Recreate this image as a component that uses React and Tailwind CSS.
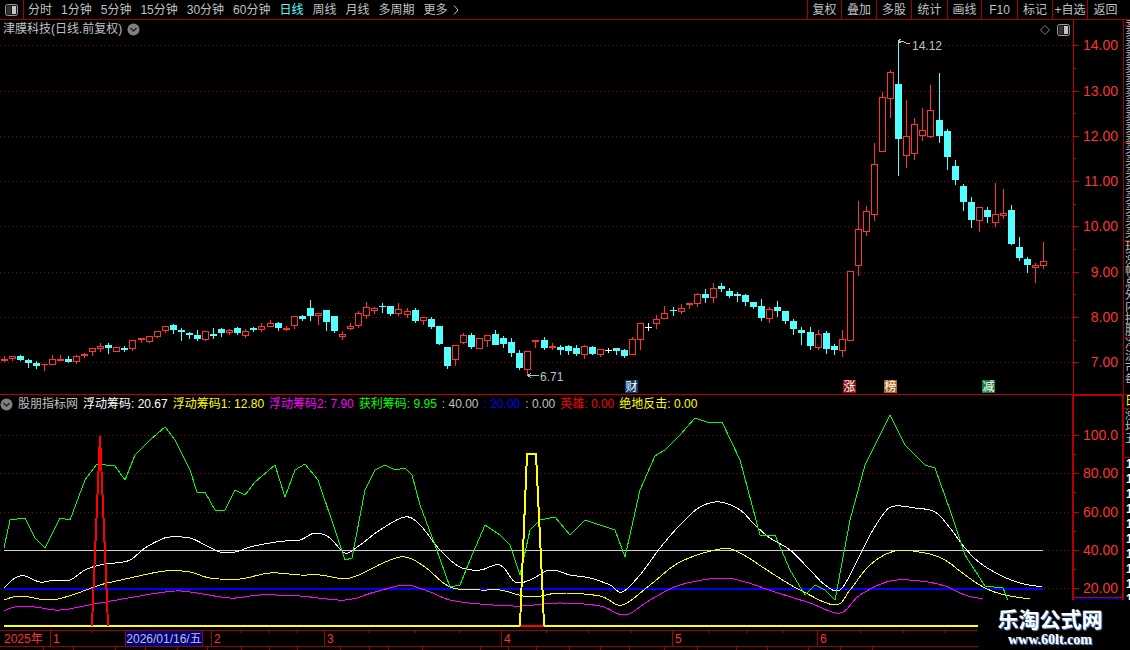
const leftTabs = ['分时', '1分钟', '5分钟', '15分钟', '30分钟', '60分钟', '日线', '周线', '月线', '多周期'];
const rightTabs = [
  ['复权', 'w-[34px]'],
  ['叠加', 'w-[35px]'],
  ['多股', 'w-[35px]'],
  ['统计', 'w-[36px]'],
  ['画线', 'w-[34px]'],
  ['F10', 'w-[36px]'],
  ['标记', 'w-[35px]'],
  ['+自选', 'w-[35px]'],
  ['返回', 'w-[36px]'],
];

// [x, bodyTop, bodyBottom, wickTop, wickBottom, colour], read off 3x crops
const candleGroups = [
  {
    ox: 0,
    oy: 290,
    rows: [
      [13, 207, 212, 199, 216, 'r'], [37, 199, 208, 199, 213, 'r'], [61, 198, 210, 195, 213, 'c'], [85, 210, 219, 207, 234, 'c'],
      [109, 219, 228, 213, 236, 'c'], [133, 222, 223, 222, 243, 'r'], [157, 208, 224, 195, 225, 'r'], [181, 208, 212, 195, 214, 'r'],
      [205, 207, 216, 198, 219, 'c'], [229, 199, 215, 195, 222, 'r'], [253, 192, 197, 188, 204, 'r'], [277, 175, 185, 175, 197, 'r'],
      [301, 169, 176, 159, 186, 'r'], [325, 165, 174, 159, 192, 'c'], [349, 172, 185, 172, 185, 'r'], [373, 174, 180, 168, 186, 'c'],
      [397, 151, 176, 151, 183, 'r'], [424, 145, 151, 144, 159, 'r'], [448, 139, 155, 139, 159, 'r'], [472, 124, 140, 124, 144, 'r'],
      [496, 109, 124, 109, 129, 'r'], [520, 105, 120, 102, 132, 'c'], [544, 120, 126, 114, 153, 'c'], [568, 129, 134, 126, 147, 'c'],
      [592, 135, 147, 120, 153, 'c'], [616, 124, 149, 124, 153, 'r'], [640, 132, 137, 114, 147, 'c'], [664, 117, 129, 114, 141, 'c'],
      [688, 121, 129, 118, 135, 'r'], [712, 114, 129, 111, 135, 'c'], [736, 124, 137, 118, 144, 'r'], [760, 114, 120, 111, 126, 'c'],
      [784, 108, 119, 99, 126, 'r'], [811, 100, 110, 90, 111, 'r'], [835, 99, 114, 96, 123, 'c'], [859, 114, 119, 108, 123, 'r'],
      [883, 79, 109, 79, 117, 'r'], [907, 79, 87, 75, 93, 'c'], [931, 54, 78, 30, 93, 'c'], [955, 70, 77, 70, 105, 'r'],
      [979, 60, 96, 60, 123, 'c'],
    ],
  },
  {
    ox: 330,
    oy: 290,
    rows: [
      [13, 78, 123, 78, 129, 'c'], [37, 133, 140, 124, 150, 'r'], [61, 109, 117, 100, 120, 'r'], [85, 70, 109, 64, 114, 'r'],
      [109, 52, 77, 37, 87, 'r'], [133, 55, 64, 51, 72, 'r'], [157, 48, 49, 40, 69, 'c'], [181, 48, 72, 48, 78, 'c'],
      [205, 58, 71, 40, 78, 'r'], [232, 64, 74, 55, 84, 'r'], [256, 60, 93, 54, 99, 'c'], [280, 82, 92, 82, 105, 'r'],
      [304, 87, 111, 81, 117, 'c'], [328, 108, 162, 108, 165, 'c'], [352, 171, 228, 171, 237, 'c'], [376, 165, 210, 165, 228, 'r'],
      [400, 135, 159, 130, 162, 'r'], [424, 135, 171, 129, 177, 'c'], [448, 145, 178, 145, 178, 'r'], [472, 135, 153, 135, 171, 'r'],
      [496, 132, 165, 120, 165, 'c'], [520, 144, 162, 138, 174, 'c'], [544, 156, 189, 144, 201, 'c'], [568, 189, 234, 180, 240, 'c'],
      [592, 183, 240, 183, 255, 'r'], [616, 150, 156, 150, 174, 'r'], [643, 150, 174, 141, 180, 'c'], [667, 168, 175, 159, 181, 'r'],
      [691, 171, 179, 165, 195, 'c'], [715, 168, 183, 165, 195, 'c'], [739, 174, 192, 165, 198, 'c'], [763, 168, 194, 165, 207, 'r'],
      [787, 171, 192, 168, 195, 'c'], [811, 178, 194, 178, 201, 'r'], [835, 181, 182, 174, 189, 'w'], [859, 174, 183, 174, 195, 'c'],
      [883, 180, 198, 177, 204, 'c'], [907, 147, 194, 141, 194, 'r'], [931, 99, 149, 99, 180, 'r'], [955, 110, 111, 99, 123, 'w'],
    ],
  },
  {
    ox: 640,
    oy: 270,
    rows: [
      [49, 148, 163, 136, 177, 'r'], [73, 130, 146, 108, 146, 'r'], [100, 121, 122, 111, 138, 'c'], [124, 115, 125, 102, 132, 'r'],
      [148, 100, 104, 100, 117, 'r'], [172, 73, 101, 70, 111, 'r'], [196, 72, 84, 57, 99, 'c'], [220, 55, 83, 39, 99, 'r'],
      [244, 48, 57, 39, 66, 'c'], [268, 63, 78, 54, 84, 'c'], [292, 72, 77, 66, 96, 'c'], [316, 75, 96, 72, 108, 'c'],
      [340, 96, 111, 96, 117, 'c'], [364, 108, 144, 87, 153, 'c'], [388, 118, 146, 111, 159, 'r'], [412, 111, 123, 93, 141, 'c'],
      [436, 123, 153, 123, 162, 'c'], [460, 153, 177, 147, 195, 'c'], [484, 180, 189, 171, 225, 'c'], [511, 186, 228, 171, 240, 'c'],
      [535, 193, 233, 180, 240, 'r'], [559, 189, 237, 183, 252, 'c'], [583, 228, 240, 222, 255, 'c'], [607, 208, 242, 180, 261, 'r'],
      [631, 4, 212, 4, 212, 'r'],
    ],
  },
  {
    ox: 840,
    oy: 40,
    rows: [
      [55, 568, 677, 484, 707, 'r'], [79, 514, 575, 499, 587, 'r'], [103, 373, 524, 310, 543, 'r'], [127, 172, 335, 156, 335, 'r'],
      [151, 97, 176, 91, 234, 'r'], [175, 132, 297, 0, 408, 'c'], [199, 289, 347, 181, 384, 'r'], [223, 253, 341, 235, 360, 'r'],
      [247, 271, 287, 205, 303, 'r'], [271, 211, 290, 135, 293, 'r'], [298, 240, 288, 99, 309, 'c'], [322, 273, 351, 267, 390, 'c'],
      [346, 378, 420, 360, 435, 'c'], [370, 438, 486, 432, 513, 'c'], [394, 486, 540, 471, 564, 'c'], [418, 502, 542, 502, 576, 'r'],
      [442, 510, 531, 501, 549, 'c'], [466, 523, 548, 429, 561, 'r'], [490, 519, 527, 447, 537, 'r'], [514, 510, 612, 495, 615, 'c'],
      [538, 621, 654, 591, 663, 'c'], [562, 657, 675, 651, 699, 'c'], [586, 676, 683, 670, 729, 'r'], [610, 664, 677, 606, 687, 'r'],
    ],
  },
];

const priceLevels = [[45, '14.00'], [91, '13.00'], [136, '12.00'], [181, '11.00'], [226, '10.00'], [272, '9.00'], [317, '8.00'], [362, '7.00']];
const indicatorLevels = [[435, '100.0'], [473, '80.00'], [512, '60.00'], [550, '40.00'], [588, '20.00']];

const tags = [
  [625, '财', '#0b3a70'],
  [843, '涨', '#8a1212'],
  [884, '榜', '#a8641c'],
  [982, '减', '#17803a'],
];

const greenLine = '4,548 10,520 25,518 35,538 45,548 60,518 70,520 85,480 97,464 115,466 125,480 135,455 150,440 165,427 175,440 190,470 197,492 205,492 215,510 225,510 235,490 245,495 255,482 275,465 285,497 295,470 305,464 318,480 335,530 345,560 352,558 365,490 375,470 385,465 395,470 405,468 412,475 420,505 435,545 450,587 460,585 470,560 485,525 500,535 510,545 520,575 530,530 540,520 555,517 570,535 585,520 600,525 615,530 625,557 640,490 655,456 665,450 680,435 695,418 710,423 722,422 740,460 760,535 775,535 790,570 805,595 815,585 825,590 835,600 850,520 865,465 880,435 890,415 905,445 925,465 935,468 950,510 965,555 985,586 1003,588 1008,600';
const whiteLine = '4,588 15,578 25,576 40,582 55,580 70,580 85,570 100,565 115,563 130,560 145,548 160,540 170,537 190,538 205,545 220,552 235,552 250,547 270,543 285,541 300,540 315,533 330,538 345,553 360,545 380,530 405,517 420,525 440,550 460,567 480,570 500,565 515,582 530,580 550,570 570,575 590,578 610,585 622,592 640,575 660,548 680,525 700,507 720,502 740,510 755,525 770,538 790,550 810,570 825,585 840,590 855,565 870,535 885,512 895,506 915,508 935,512 950,528 965,548 980,563 1000,575 1020,583 1042,587';
const yellowLine = '4,600 20,596 50,600 75,594 100,585 130,578 165,571 190,572 210,578 240,579 270,573 300,575 320,575 350,578 385,562 405,557 425,567 450,587 480,590 500,590 530,597 560,593 600,596 622,605 650,585 680,562 720,549 740,553 770,572 800,590 835,605 850,590 870,565 895,551 925,553 945,560 965,575 985,588 1005,595 1030,599';
const magentaLine = '4,611 15,607 35,607 60,610 100,603 165,592 190,592 230,598 260,595 300,596 345,600 375,592 405,585 430,592 450,600 480,604 520,606 560,603 600,606 625,615 650,600 680,585 720,578 745,582 775,592 810,603 840,613 860,595 890,581 920,581 945,586 965,595 983,599';

const legend = [
  ['股朋指标网', 'text-[#c0c0c0]'],
  ['浮动筹码: 20.67', 'text-white'],
  ['浮动筹码1: 12.80', 'text-[#ffff00]'],
  ['浮动筹码2: 7.90', 'text-[#ff00ff]'],
  ['获利筹码: 9.95', 'text-[#00ff00]'],
  [': 40.00', 'text-[#c0c0c0]'],
  [': 20.00', 'text-[#0000ff]'],
  [': 0.00', 'text-[#c0c0c0]'],
  ['英雄: 0.00', 'text-[#ff0000]'],
  ['绝地反击: 0.00', 'text-[#ffff00]'],
];

const dateSegments = [
  ['2025年', 'w-[51px] pl-[4px] border-r border-[#a00000]'],
  ['1', 'w-[161px] pl-[2px] border-r border-[#a00000]'],
  ['2', 'w-[113px] pl-[2px] border-r border-[#a00000]'],
  ['3', 'w-[177px] pl-[2px] border-r border-[#a00000]'],
  ['4', 'w-[171px] pl-[2px] border-r border-[#a00000]'],
  ['5', 'w-[145px] pl-[2px] border-r border-[#a00000]'],
  ['6', 'w-[160px] pl-[2px]'],
];
const topTicks = [92, 241, 269, 297, 369, 415, 459, 546, 588, 631, 709, 746, 782, 860, 903, 945];
const bottomTicks = [43, 73, 115, 145, 177, 207, 241, 269, 297, 340, 369, 388, 422, 480, 508, 536, 569, 600, 629, 664, 697, 736, 767, 808, 840, 872];

const sideSections = [
  { rows: ['卖'], cls: 'h-[6px]' },
  { rows: ['卖', '卖', '卖', '卖', '卖', '卖', '卖', '卖', '卖', '卖'], cls: 'h-[117px]' },
  { rows: ['买', '买', '买', '买', '买', '买', '买', '买'], cls: 'h-[98px]' },
  { rows: ['现', '涨', '幅', '总', '外', '内', '换', '股'], cls: 'h-[97px]' },
  { rows: ['净', '流', '市', '每'], cls: 'h-[57px]' },
];

// turns the sampled "x,y x,y" string into a rounded curve so the lines don't look polygonal
function smooth(points) {
  const p = points.split(' ').map((pair) => pair.split(',').map(Number));
  const out = [];
  for (let i = 0; i < p.length - 1; i++) {
    const a = p[Math.max(i - 1, 0)];
    const b = p[i];
    const c = p[i + 1];
    const d = p[Math.min(i + 2, p.length - 1)];
    for (let s = 0; s < 6; s++) {
      const t = s / 6;
      const x = 0.5 * (2 * b[0] + (c[0] - a[0]) * t + (2 * a[0] - 5 * b[0] + 4 * c[0] - d[0]) * t * t + (3 * b[0] - a[0] - 3 * c[0] + d[0]) * t * t * t);
      const y = 0.5 * (2 * b[1] + (c[1] - a[1]) * t + (2 * a[1] - 5 * b[1] + 4 * c[1] - d[1]) * t * t + (3 * b[1] - a[1] - 3 * c[1] + d[1]) * t * t * t);
      out.push(`${x.toFixed(1)},${y.toFixed(1)}`);
    }
  }
  const last = p[p.length - 1];
  out.push(`${last[0]},${last[1]}`);
  return out.join(' ');
}

function PanelIcon() {
  return (
    <svg width="13" height="12" viewBox="0 0 13 12" className="block">
      <rect x="0.5" y="0.5" width="12" height="11" rx="2" fill="#1a1a1a" stroke="#9a9a9a" />
      <rect x="7" y="2" width="4" height="8" fill="#c4c4c4" />
      <rect x="2" y="2" width="4" height="8" fill="#333333" />
    </svg>
  );
}

function ChevronBadge() {
  return (
    <svg width="13" height="13" viewBox="0 0 13 13" className="block">
      <circle cx="6.5" cy="6.5" r="6" fill="#808080" />
      <polyline points="3.5,5 6.5,8 9.5,5" fill="none" stroke="#222222" strokeWidth="1.4" />
    </svg>
  );
}

function Candle({ x, bodyTop, bodyBottom, wickTop, wickBottom, tone }) {
  const colour = tone === 'r' ? '#ff3232' : tone === 'c' ? '#54ffff' : '#ffffff';
  const height = bodyBottom - bodyTop;
  if (height <= 2) {
    return (
      <g fill={colour}>
        <rect x={x} y={wickTop} width="1" height={wickBottom - wickTop} />
        <rect x={x - 3} y={bodyTop} width="7" height={Math.max(height, 1)} />
      </g>
    );
  }
  if (tone === 'c') {
    return (
      <g fill={colour}>
        <rect x={x} y={wickTop} width="1" height={wickBottom - wickTop} />
        <rect x={x - 3} y={bodyTop} width="7" height={height} />
      </g>
    );
  }
  return (
    <g>
      <rect x={x} y={wickTop} width="1" height={bodyTop - wickTop} fill={colour} />
      <rect x={x} y={bodyBottom} width="1" height={wickBottom - bodyBottom} fill={colour} />
      <rect x={x - 2.5} y={bodyTop + 0.5} width="6" height={height - 1} fill="#000000" stroke={colour} />
    </g>
  );
}

function Axis({ top, width, height, levels, minors }) {
  return (
    <svg width={width} height={height} viewBox={`1074 ${top} ${width} ${height}`} className="block shrink-0" shapeRendering="crispEdges">
      {levels.map(([y]) => (
        <rect key={y} x="1074" y={y} width="5" height="1" fill="#c00000" />
      ))}
      {minors.map((y) => (
        <rect key={y} x="1074" y={y} width="2" height="1" fill="#c00000" />
      ))}
      {levels.map(([y, label]) => (
        <text key={label} x="1118" y={y + 5} textAnchor="end" fontSize="14" fill="#ff3232" shapeRendering="auto">
          {label}
        </text>
      ))}
    </svg>
  );
}

function PriceChart() {
  const candles = candleGroups.flatMap((group) =>
    group.rows.map(([zx, bt, bb, wt, wb, tone]) => ({
      x: Math.round(group.ox + zx / 3),
      bodyTop: Math.round(group.oy + bt / 3),
      bodyBottom: Math.round(group.oy + bb / 3),
      wickTop: Math.round(group.oy + wt / 3),
      wickBottom: Math.round(group.oy + wb / 3),
      tone,
    }))
  );

  return (
    <svg width="1073" height="374" viewBox="0 20 1073 374" className="block shrink-0" shapeRendering="crispEdges">
      {priceLevels.map(([y]) => (
        <line key={y} x1="0" x2="1073" y1={y + 0.5} y2={y + 0.5} stroke="#900000" strokeDasharray="1 3" />
      ))}
      {candles.map((c) => (
        <Candle key={c.x} {...c} />
      ))}
      <polyline points="898,42 902,41 906,43 910,44" fill="none" stroke="#c0c0c0" />
      <polyline points="901,39 898,41 901,43" fill="none" stroke="#c0c0c0" />
      <text x="912" y="50" fontSize="12" fill="#c0c0c0" shapeRendering="auto">14.12</text>
      <line x1="528" x2="539" y1="375.5" y2="375.5" stroke="#c0c0c0" />
      <polyline points="531,373 528,375.5 531,378" fill="none" stroke="#c0c0c0" />
      <text x="540" y="381" fontSize="12" fill="#c0c0c0" shapeRendering="auto">6.71</text>
      {tags.map(([x, label, bg]) => (
        <g key={label}>
          <rect x={x} y="380" width="13" height="13" fill={bg} />
          <text x={x + 0.5} y="391" fontSize="12" fill="#ffffff" shapeRendering="auto">{label}</text>
        </g>
      ))}
    </svg>
  );
}

function IndicatorChart() {
  return (
    <svg width="1072" height="235" viewBox="0 395 1072 235" className="block shrink-0" shapeRendering="crispEdges">
      {indicatorLevels.map(([y]) => (
        <line key={y} x1="0" x2="1072" y1={y + 0.5} y2={y + 0.5} stroke="#900000" strokeDasharray="1 3" />
      ))}
      <line x1="4" x2="1043" y1="550.5" y2="550.5" stroke="#d0d0d0" />
      <line x1="4" x2="1043" y1="588.5" y2="588.5" stroke="#0000ff" strokeWidth="2" />
      <polyline points={smooth(whiteLine)} fill="none" stroke="#ffffff" />
      <polyline points={smooth(yellowLine)} fill="none" stroke="#ffff00" />
      <polyline points={smooth(magentaLine)} fill="none" stroke="#ff00ff" />
      <polyline points={greenLine} fill="none" stroke="#00ff00" />
      <rect x="4" y="625" width="974" height="2" fill="#ffff00" />
      <rect x="520" y="625" width="24" height="2" fill="#ff0000" />
      <polyline points="92,626 93,600 100,436 107,600 108,626" fill="none" stroke="#ff0000" strokeWidth="2" />
      <polyline points="520,626 521,600 527,454 536,454 543,600 544,626" fill="none" stroke="#ffff00" strokeWidth="2" />
    </svg>
  );
}

function Toolbar() {
  return (
    <div className="flex h-5 shrink-0 items-stretch justify-between border-b border-[#a00000] text-xs text-[#c0c0c0]">
      <div className="flex items-center">
        <div className="flex h-full w-6 items-center justify-center border-r border-[#a00000]">
          <PanelIcon />
        </div>
        <div className="flex items-center gap-[9px] pl-1">
          {leftTabs.map((tab) => (
            <span key={tab} className={tab === '日线' ? 'text-[#54ffff]' : ''}>{tab}</span>
          ))}
          <span className="flex items-center gap-[5px]">
            更多
            <svg width="6" height="10" viewBox="0 0 6 10">
              <polyline points="1,0.5 5,5 1,9.5" fill="none" stroke="#c0c0c0" />
            </svg>
          </span>
        </div>
      </div>
      <div className="flex pr-[7px]">
        {rightTabs.map(([tab, width]) => (
          <div key={tab} className={`${width} flex items-center justify-center whitespace-nowrap border-l border-[#a00000]`}>
            {tab}
          </div>
        ))}
      </div>
    </div>
  );
}

function SideStrip() {
  return (
    <div className="flex w-[7px] shrink-0 flex-col overflow-hidden border-l border-[#a00000] text-xs leading-[12px] text-[#c0c0c0]">
      {sideSections.map((section, i) => (
        <div key={i} className={`${section.cls} shrink-0 overflow-hidden border-b border-[#a00000] pl-[1px]`}>
          {section.rows.map((row, j) => (
            <div key={j} className="w-3">{row}</div>
          ))}
        </div>
      ))}
      <div className="h-[14px] shrink-0 overflow-hidden border-b border-[#a00000] pl-[1px] text-[#ffff00]">
        <div className="w-3">日</div>
      </div>
      <div className="h-[49px] shrink-0 overflow-hidden border-b border-[#a00000] pl-[1px]">
        <div className="w-3">涨</div>
        <div className="w-3">均</div>
        <div className="w-3">五</div>
      </div>
      <div className="flex flex-col gap-[3px] pl-[2px] font-bold text-white">
        {['1', '1', '1', '1', '1', '1', '1', '1', '1', '1'].map((n, i) => (
          <div key={i}>{n}</div>
        ))}
      </div>
    </div>
  );
}

function DateRow() {
  return (
    <div className="relative h-5 w-[978px] shrink-0 text-xs text-[#ff3232]">
      <div className="flex h-[17px] border-y border-[#a00000]">
        {dateSegments.map(([label, cls]) => (
          <div key={label} className={`${cls} flex shrink-0 items-center`}>{label}</div>
        ))}
      </div>
      <div className="absolute left-[125px] top-[1px] flex h-[15px] w-[78px] items-center justify-center border-x border-[#a00000] bg-[#000080] text-[#c0c0c0]">
        2026/01/16/五
      </div>
      <svg width="978" height="20" viewBox="0 0 978 20" className="pointer-events-none absolute left-0 top-0" shapeRendering="crispEdges">
        {topTicks.map((x) => (
          <rect key={x} x={x} y="1" width="1" height="2" fill="#a00000" />
        ))}
        {bottomTicks.map((x) => (
          <rect key={x} x={x} y="17" width="1" height="3" fill="#a00000" />
        ))}
      </svg>
    </div>
  );
}

export default function App() {
  return (
    <div className="relative flex h-[650px] w-[1130px] flex-col overflow-hidden bg-black font-['Liberation_Sans','Noto_Sans_CJK_SC',sans-serif]">
      <Toolbar />
      <div className="flex min-h-0 flex-1">
        <div className="flex w-[1123px] shrink-0 flex-col">
          <div className="relative flex h-[374px] shrink-0">
            <PriceChart />
            <div className="h-full w-px shrink-0 bg-[#c00000]" />
            <Axis top={20} width={49} height={374} levels={priceLevels} minors={[68, 113, 158, 204, 249, 294, 340]} />
            <div className="absolute left-[3px] top-[2px] flex items-center gap-[5px] text-xs leading-[14px] text-[#c0c0c0]">
              <span>津膜科技(日线.前复权)</span>
              <ChevronBadge />
            </div>
            <div className="absolute left-[1040px] top-[4px] flex items-center gap-[7px]">
              <svg width="10" height="10" viewBox="0 0 10 10">
                <polygon points="5,0.5 9.5,5 5,9.5 0.5,5" fill="none" stroke="#808080" />
              </svg>
              <PanelIcon />
            </div>
          </div>
          <div className="relative flex h-[236px] shrink-0 border-t border-[#c00000]">
            <IndicatorChart />
            <div className="h-full w-[2px] shrink-0 bg-[#b00000]" />
            <div className="flex w-[48px] shrink-0 flex-col border-t border-[#c00000]">
              <Axis top={396} width={48} height={201} levels={indicatorLevels} minors={[454, 492, 531, 569]} />
              <div className="h-[3px] shrink-0 border-t border-[#c00000] bg-[#000080]" />
            </div>
            <div className="h-full w-px shrink-0 bg-[#b00000]" />
            <div className="absolute left-0 top-[2px] flex items-center gap-[5px] whitespace-pre text-xs leading-[14px]">
              <ChevronBadge />
              {legend.map(([label, color]) => (
                <span key={label} className={color}>{label}</span>
              ))}
            </div>
          </div>
          <DateRow />
        </div>
        <SideStrip />
      </div>

      <div className="absolute bottom-0 left-[978px] right-0 top-[600px] bg-black pl-[19px] pt-[8px] text-center text-white">
        <div className="w-[106px] text-[21px] font-bold leading-[24px] [text-shadow:1px_1px_1px_#6f9fe0]">乐淘公式网</div>
        <div className="mt-[1px] w-[106px] font-['Liberation_Serif',serif] text-sm font-bold leading-[14px] [text-shadow:1px_1px_1px_#6f9fe0]">www.60lt.com</div>
      </div>
    </div>
  );
}
